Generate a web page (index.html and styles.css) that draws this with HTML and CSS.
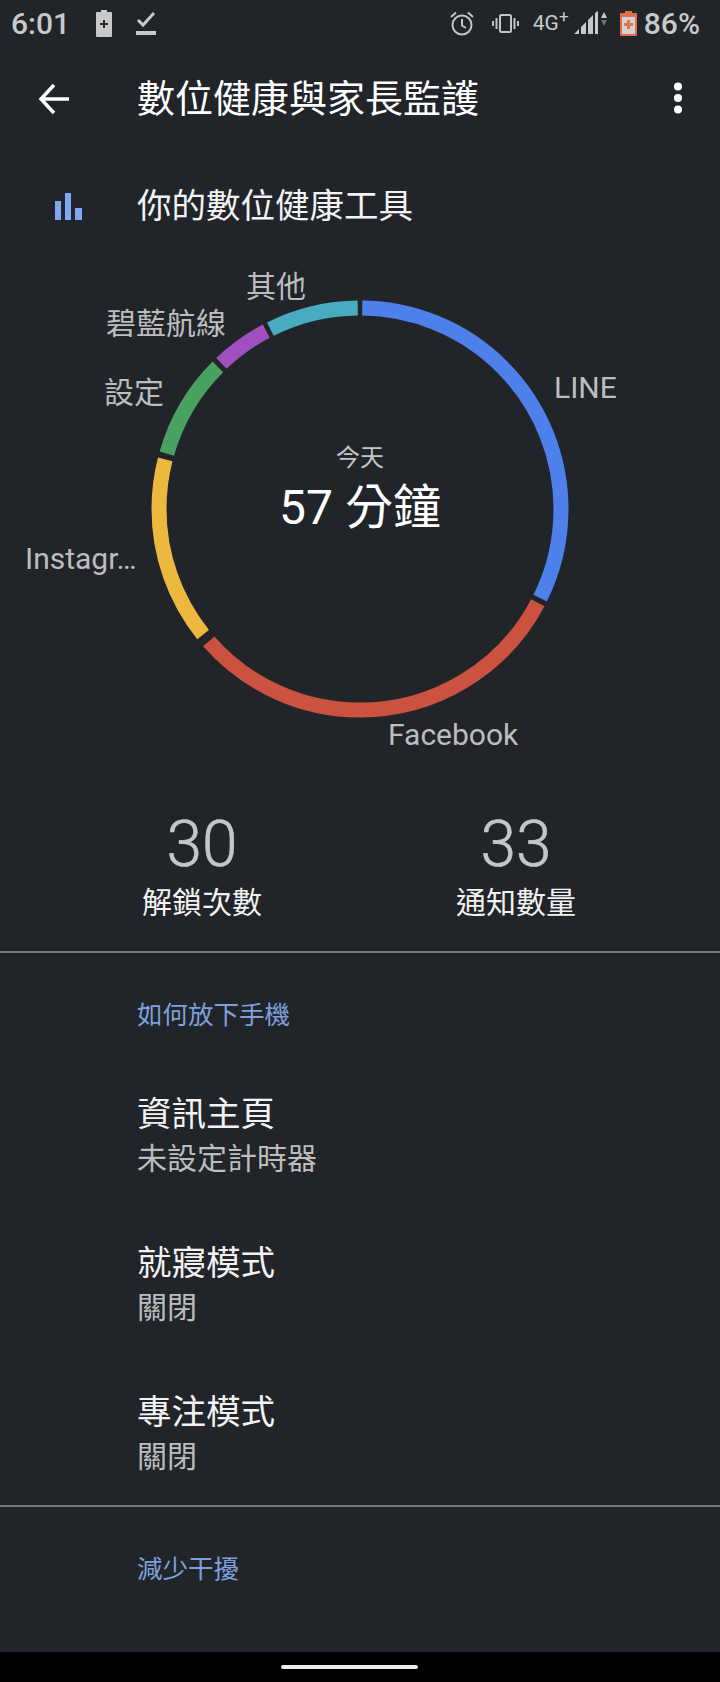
FILE: index.html
```html
<!DOCTYPE html>
<html lang="zh-Hant">
<head>
    <meta charset="UTF-8">
    <title>數位健康與家長監護</title>
    <link rel="stylesheet" href="styles.css">
</head>
<body>
<div class="screen">
    <div class="statusbar">
        <span class="clock">6:01</span>
        <svg class="st-icon charge" width="16" height="27" viewBox="0 0 16 27">
            <path fill="#c9c9c9" d="M5 0h6v2h4q1 0 1 1v23q0 1-1 1H1q-1 0-1-1V3q0-1 1-1h4z"/>
            <path fill="#24282c" d="M7 10h2v3h3v2H9v3H7v-3H4v-2h3z"/>
        </svg>
        <svg class="st-icon task" width="20" height="24" viewBox="0 0 20 24">
            <path fill="none" stroke="#c9c9c9" stroke-width="3" d="M2 9l5 5L18 2"/>
            <path fill="#c9c9c9" d="M0 20h20v4H0z"/>
        </svg>
        <div class="st-right">
            <svg class="st-alarm" width="24" height="25" viewBox="0 0 24 25">
                <circle cx="12" cy="14" r="9.5" fill="none" stroke="#c4c4c4" stroke-width="2"/>
                <path fill="none" stroke="#c4c4c4" stroke-width="2" d="M12 8v6.5l4 2.5M1 6l5-4.5M23 6l-5-4.5"/>
            </svg>
            <svg class="st-vibrate" width="27" height="19" viewBox="0 0 27 19">
                <rect x="8" y="1" width="11" height="17" rx="1.5" fill="none" stroke="#c4c4c4" stroke-width="2"/>
                <path fill="#c4c4c4" d="M3.5 4h2v11h-2zM21.500 4h2v11h-2zM0 7h2v5H0zM25 7h2v5h-2z"/>
            </svg>
            <span class="st-net">4G<sup>+</sup></span>
            <svg class="st-signal" width="33" height="24" viewBox="0 0 33 24">
                <path fill="#c9c9c9" d="M0 23L5 18v5zM7 16l5-5v12H7zM14 9l5-5v19h-5zM21 2l3-2v23h-3z"/>
                <path fill="#c9c9c9" d="M30 1l3 6h-6z"/>
                <path fill="#6d7074" d="M30 15l3-6h-6z"/>
            </svg>
            <svg class="st-battery" width="17" height="25" viewBox="0 0 17 25">
                <path fill="#dd7248" d="M5 0h7v2h4q1 0 1 1v21q0 1-1 1H1q-1 0-1-1V3q0-1 1-1h4z"/>
                <path fill="#d2d2d2" d="M2 6h13v17H2z"/>
                <path fill="#dd7248" d="M7 9h3v3h3v3h-3v3H7v-3H4v-3h3z"/>
            </svg>
            <span class="st-pct">86%</span>
        </div>
    </div>

    <div class="appbar">
        <svg class="back" width="32" height="32" viewBox="0 0 32 32">
            <path fill="none" stroke="#fff" stroke-width="3.500" d="M31 16H3M16 2L3 16l13 14"/>
        </svg>
        <h1 class="title">數位健康與家長監護</h1>
        <svg class="more" width="10" height="34" viewBox="0 0 10 34">
            <circle cx="5" cy="5.500" r="4"/>
            <circle cx="5" cy="17" r="4"/>
            <circle cx="5" cy="28.500" r="4"/>
        </svg>
    </div>

    <div class="tools-row">
        <svg class="bars" width="27" height="27" viewBox="0 0 27 27">
            <rect x="0" y="8" width="6" height="19"/>
            <rect x="10" y="0" width="6" height="27"/>
            <rect x="20" y="15" width="7" height="12"/>
        </svg>
        <h2 class="tools-title">你的數位健康工具</h2>
    </div>

    <div class="chart">
        <svg class="ring" width="420" height="420" viewBox="0 0 420 420">
            <g fill="none" stroke-width="15" transform="rotate(-90 210 210)">
                <circle cx="210" cy="210" r="201" pathLength="360" stroke="#4d80ea" stroke-dasharray="115.700 360" stroke-dashoffset="-0.650"/>
                <circle cx="210" cy="210" r="201" pathLength="360" stroke="#cb5140" stroke-dasharray="111 360" stroke-dashoffset="-117.800"/>
                <circle cx="210" cy="210" r="201" pathLength="360" stroke="#ecb93e" stroke-dasharray="53 360" stroke-dashoffset="-231.300"/>
                <circle cx="210" cy="210" r="201" pathLength="360" stroke="#48a160" stroke-dasharray="29 360" stroke-dashoffset="-286"/>
                <circle cx="210" cy="210" r="201" pathLength="360" stroke="#a04fbe" stroke-dasharray="15.800 360" stroke-dashoffset="-316.400"/>
                <circle cx="210" cy="210" r="201" pathLength="360" stroke="#48abc0" stroke-dasharray="25.850 360" stroke-dashoffset="-333.500"/>
            </g>
        </svg>
        <div class="today">今天</div>
        <div class="total">57 分鐘</div>
        <span class="lbl lbl-other">其他</span>
        <span class="lbl lbl-azure">碧藍航線</span>
        <span class="lbl lbl-settings">設定</span>
        <span class="lbl lbl-line">LINE</span>
        <span class="lbl lbl-insta">Instagr…</span>
        <span class="lbl lbl-fb">Facebook</span>
    </div>

    <div class="stats">
        <div class="stat">
            <div class="stat-num">30</div>
            <div class="stat-name">解鎖次數</div>
        </div>
        <div class="stat">
            <div class="stat-num">33</div>
            <div class="stat-name">通知數量</div>
        </div>
    </div>

    <div class="section">
        <div class="section-head">如何放下手機</div>
        <div class="item">
            <div class="item-title">資訊主頁</div>
            <div class="item-sub">未設定計時器</div>
        </div>
        <div class="item">
            <div class="item-title">就寢模式</div>
            <div class="item-sub">關閉</div>
        </div>
        <div class="item">
            <div class="item-title">專注模式</div>
            <div class="item-sub">關閉</div>
        </div>
    </div>

    <div class="section">
        <div class="section-head">減少干擾</div>
    </div>

    <div class="navbar"><div class="pill"></div></div>
</div>
</body>
</html>
```

FILE: styles.css
```css
* {
    box-sizing: border-box;
}
body {
    margin: 0;
    font-family: Roboto, "Noto Sans CJK TC", sans-serif;
    background-color: #212529;
}
.screen {
    display: flex;
    flex-direction: column;
    width: 720px;
    height: 1682px;
    overflow: hidden;
    background-color: #212529;
}

/* status bar */
.statusbar {
    display: flex;
    align-items: center;
    flex: none;
    height: 46px;
    padding: 0 20px 0 11px;
    color: #c9c9c9;
}
.clock {
    font-size: 30px;
    font-weight: 500;
    width: 85px;
}
.task {
    margin-left: 24px;
}
.st-right {
    display: flex;
    align-items: center;
    margin-left: auto;
}
.st-vibrate {
    margin-left: 18px;
}
.st-net {
    font-size: 21px;
    margin-left: 14px;
    width: 41px;
    line-height: 24px;
}
.st-net sup {
    font-size: 17px;
    line-height: 0;
}
.st-battery {
    margin-left: 13px;
}
.st-pct {
    font-size: 30px;
    font-weight: 500;
    margin-left: 7px;
}

/* app bar */
.appbar {
    display: flex;
    align-items: center;
    flex: none;
    height: 106px;
    padding: 0 37px 0 38px;
}
.title {
    margin: 0 0 0 67px;
    font-size: 38px;
    font-weight: 400;
    color: #fff;
    line-height: 50px;
}
.more {
    margin-left: auto;
    margin-bottom: 2px;
    fill: #fff;
}

.tools-row {
    display: flex;
    align-items: center;
    flex: none;
    height: 108px;
    padding-left: 55px;
}
.bars {
    fill: #7fa8f2;
}
.tools-title {
    margin: 0 0 0 55px;
    font-size: 34.500px;
    font-weight: 400;
    color: #f2f2f2;
    line-height: 50px;
}

/* usage ring and its app labels */
.chart {
    position: relative;
    flex: none;
    height: 550px;
}
.ring {
    position: absolute;
    left: 150px;
    top: 39px;
}
.today {
    position: absolute;
    left: 0;
    right: 0;
    top: 181px;
    text-align: center;
    font-size: 24px;
    line-height: 34px;
    color: #c4c4c4;
}
.total {
    position: absolute;
    left: 0;
    right: 0;
    top: 218px;
    text-align: center;
    font-size: 48px;
    line-height: 60px;
    color: #fff;
}
.lbl {
    position: absolute;
    font-size: 30px;
    line-height: 40px;
    color: #bdbdbd;
    white-space: nowrap;
}
.lbl-other {
    left: 246px;
    top: 7px;
}
.lbl-azure {
    left: 106px;
    top: 44px;
}
.lbl-settings {
    left: 104px;
    top: 113px;
}
.lbl-line {
    left: 554px;
    top: 108px;
}
.lbl-insta {
    left: 25px;
    top: 279px;
}
.lbl-fb {
    left: 388px;
    top: 455px;
}

/* unlock and notification counts */
.stats {
    display: grid;
    grid-template-columns: 314px 314px;
    flex: none;
    padding: 0 0 26px 45px;
    border-bottom: 2px solid #74777a;
    height: 143px;
}
.stat {
    text-align: center;
}
.stat-num {
    font-size: 64px;
    font-weight: 300;
    line-height: 70px;
    color: #c6c6c6;
    -webkit-text-stroke: 0.6px #c6c6c6;
}
.stat-name {
    font-size: 30px;
    line-height: 46px;
    color: #f2f2f2;
}

/* list sections */
.section {
    flex: none;
    padding-left: 137px;
}
.section + .section {
    border-top: 2px solid #74777a;
}
.section-head {
    padding-top: 42px;
    font-size: 25.500px;
    line-height: 40px;
    color: #7f9fdc;
}
.item {
    margin-top: 57px;
}
.item + .item {
    margin-top: 60px;
}
.item:last-child {
    padding-bottom: 26px;
}
.item-title {
    font-size: 34.500px;
    line-height: 45px;
    color: #f2f2f2;
}
.item-sub {
    font-size: 30px;
    line-height: 44px;
    color: #bdbdbd;
}

/* gesture bar */
.navbar {
    display: flex;
    align-items: center;
    flex: none;
    height: 30px;
    margin-top: auto;
    padding-left: 281px;
    background-color: #000;
}
.pill {
    width: 137px;
    height: 4px;
    border-radius: 2px;
    background-color: #eee;
}
```
